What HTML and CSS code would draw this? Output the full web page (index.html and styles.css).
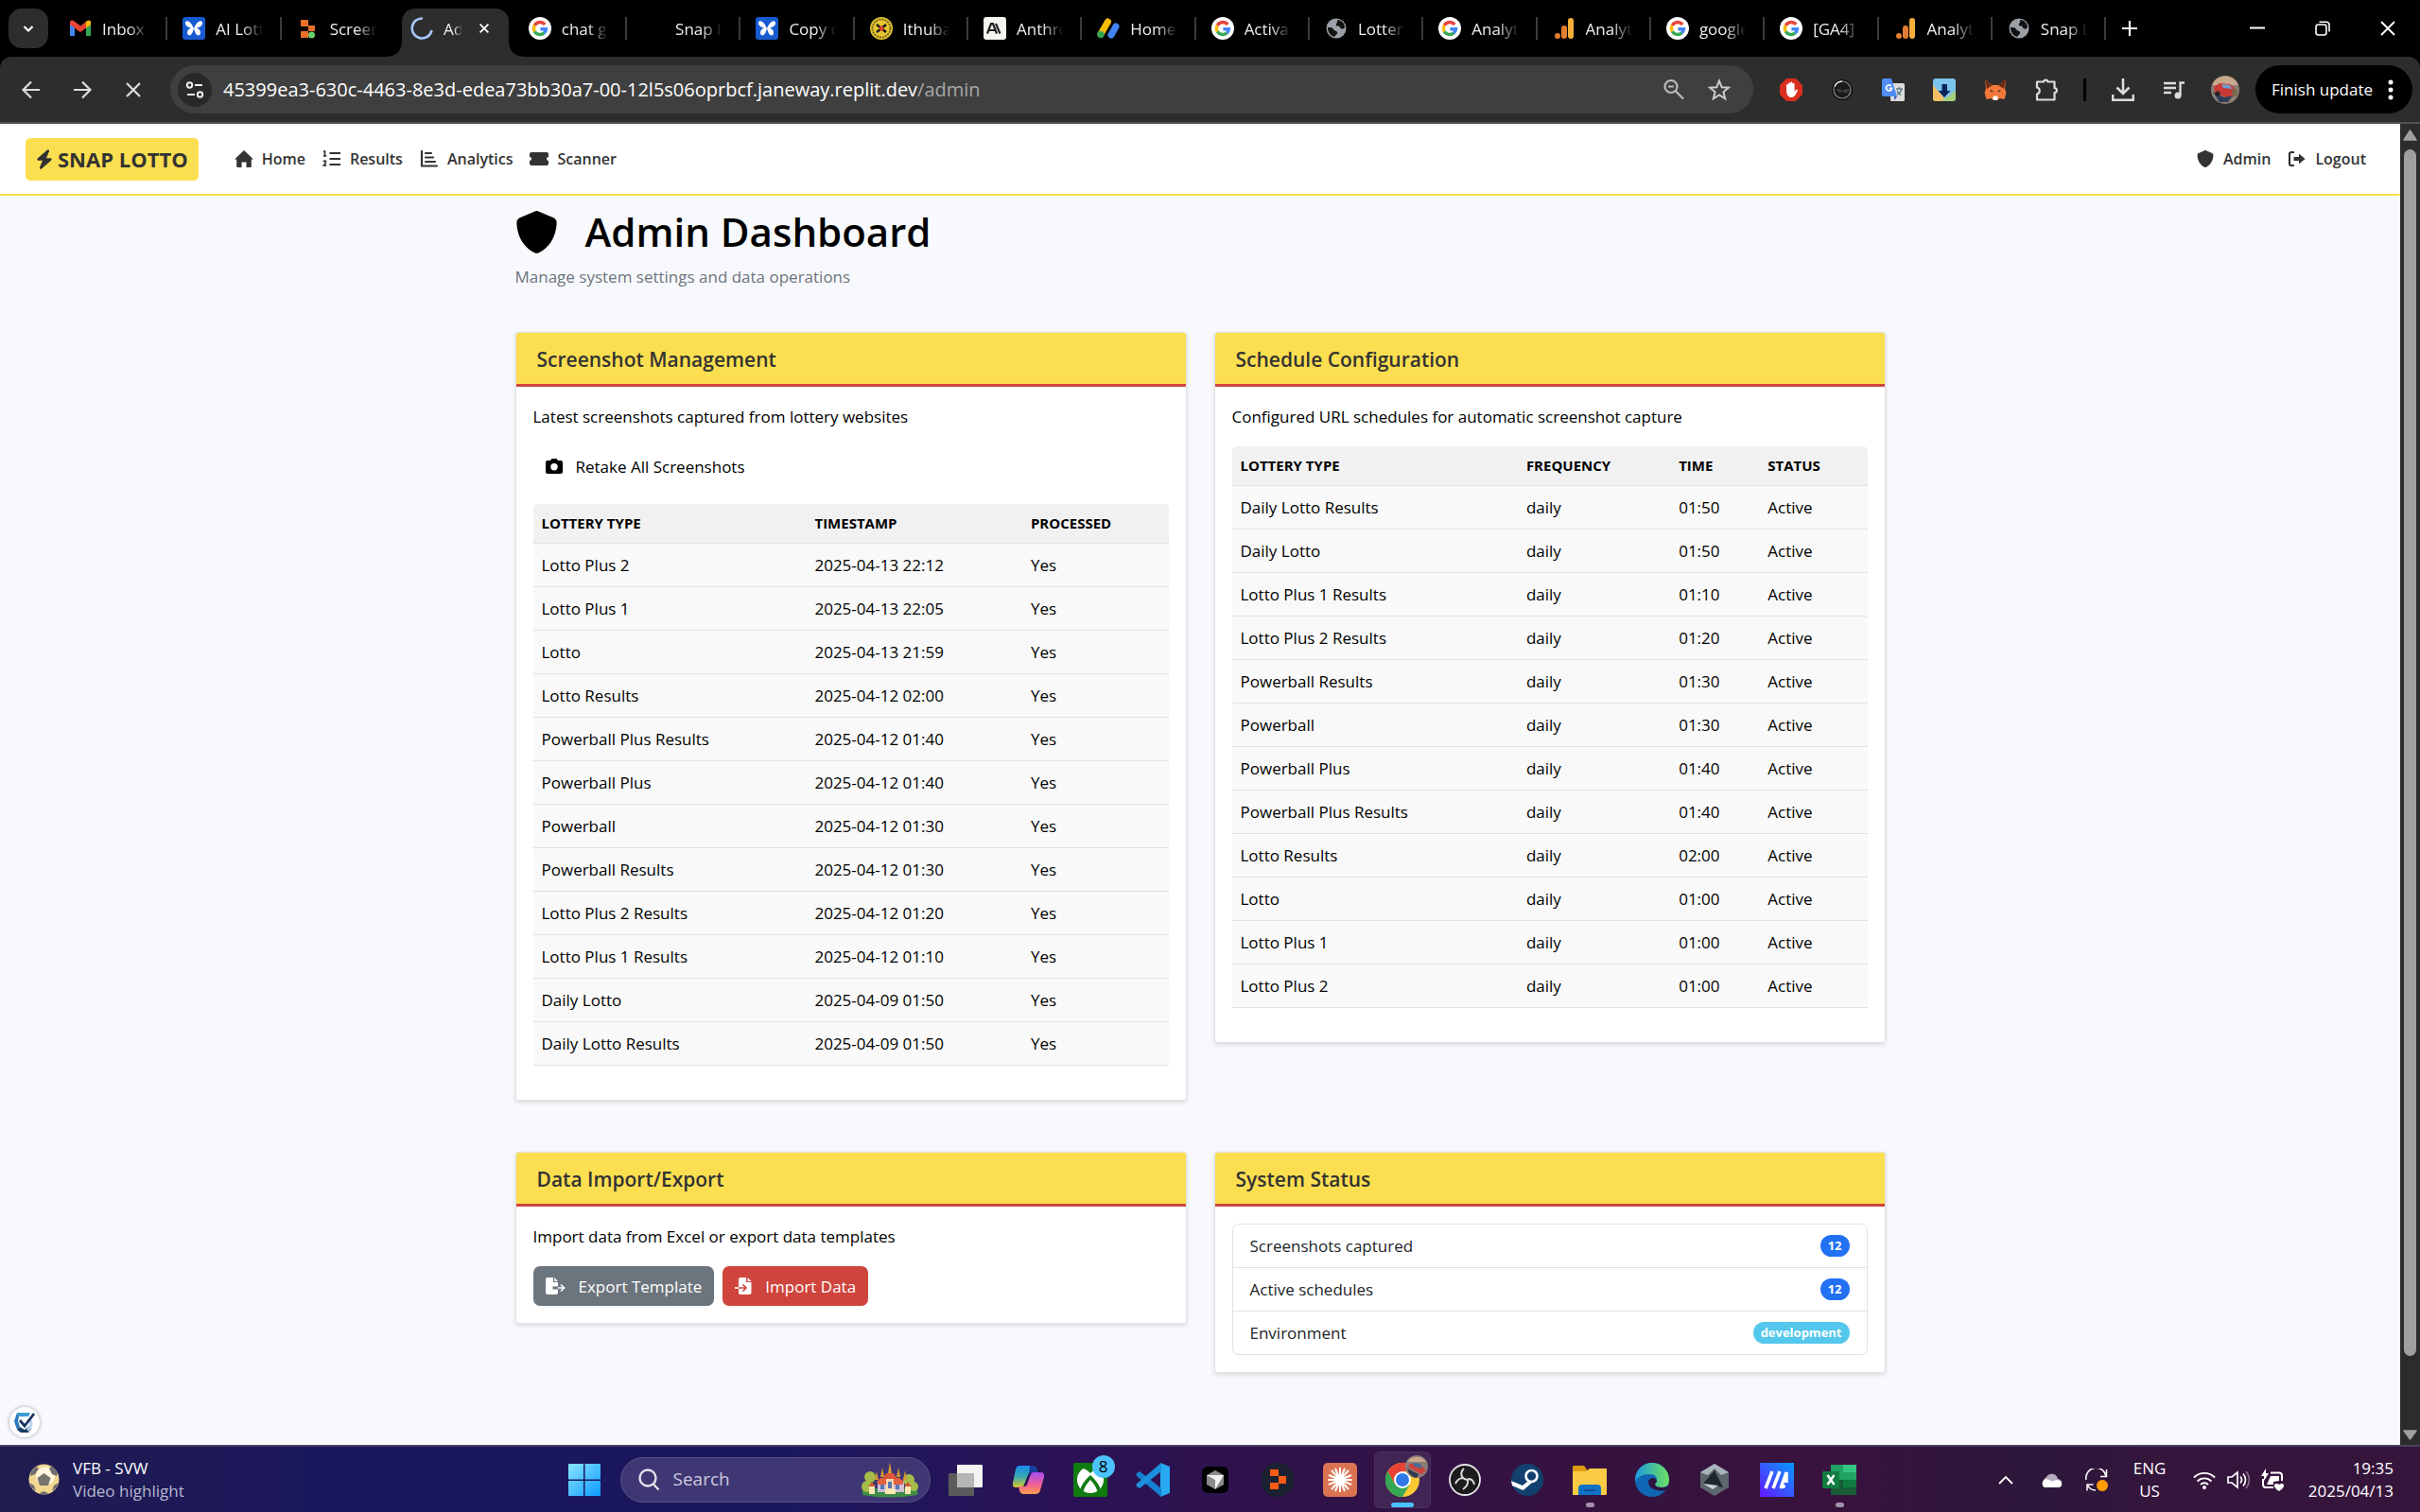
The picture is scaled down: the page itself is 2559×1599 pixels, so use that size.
FILE: index.html
```html
<!DOCTYPE html>
<html lang="en">
<head>
<meta charset="utf-8">
<meta name="viewport" content="width=device-width, initial-scale=1">
<title>Admin Dashboard - Snap Lotto</title>
<link rel="stylesheet" href="styles.css">
</head>
<body>
<svg class="sprite" aria-hidden="true">
  <symbol id="i-google" viewBox="0 0 24 24"><circle cx="12" cy="12" r="12" fill="#fff"/><g fill="none" stroke-width="3.4"><path d="M17.2 8A6.6 6.6 0 0 0 6.3 8.8" stroke="#e8453c"/><path d="M6.3 8.8a6.6 6.6 0 0 0 0 6.5" stroke="#fabb05"/><path d="M6.3 15.3a6.6 6.6 0 0 0 10 1.6" stroke="#34a853"/><path d="M16.3 16.9a6.4 6.4 0 0 0 2.2-4.2H12.4" stroke="#4285f4"/></g></symbol>
  <symbol id="i-fly" viewBox="0 0 24 24"><rect width="24" height="24" rx="3" fill="#175bd0"/><path d="M12 12C8 2 2 3 3 7c.6 3 4 4 6 4.500C5 13 4 17 6 19c3 2 5-3 6-7 1 4 3 9 6 7 2-2 1-6-3-7.500 2-.5 5.400-1.500 6-4.500C22 3 16 2 12 12z" fill="#fff"/></symbol>
  <symbol id="i-globe" viewBox="0 0 24 24"><circle cx="12" cy="12" r="10.500" fill="#9aa0a6"/><path d="M13 3c4 0 8 3 8 8-2 3-5 1-5 0 0-2-3-1-4-2-1-2 2-3 1-6zM3 11c3 0 5 0 6 2s3 1 4 3-2 3-3 5c-4-1-7-5-7-10z" fill="#111"/></symbol>
  <symbol id="i-bars" viewBox="0 0 24 24"><circle cx="5" cy="20" r="3" fill="#e37e2f"/><rect x="9" y="9" width="6" height="14" rx="3" fill="#e37e2f"/><rect x="16" y="1" width="6" height="22" rx="3" fill="#f5ae3a"/></symbol>
  <symbol id="i-shield" viewBox="0 0 512 512"><path fill="currentColor" d="M256 0c4.600 0 9.200 1 13.400 2.900L457.700 82.800c22 9.300 38.400 31 38.300 57.200c-.5 99.200-41.300 280.700-213.600 363.200c-16.700 8-36.100 8-52.800 0C57.300 420.700 16.500 239.200 16 140c-.1-26.200 16.300-47.900 38.300-57.200L242.700 2.900C246.800 1 251.400 0 256 0z"/></symbol>
</svg>

<header class="browser">
  <div class="tabstrip">
    <button class="tab-search" aria-label="Search tabs"><svg class="ic16" viewBox="0 0 16 16"><path d="M3.500 6l4.500 4.500L12.500 6" fill="none" stroke="#fff" stroke-width="2.200"/></svg></button>
    <div class="tabs">
      <a class="tab" href="#"><svg class="fav" viewBox="0 0 24 24"><path d="M1 20V7l5 4v9z" fill="#4285f4"/><path d="M18 20v-9l5-4v13z" fill="#34a853"/><path d="M1 8V5.500C1 3 3.500 3 5 4l7 5.500L19 4c1.500-1 4-1 4 1.500V8l-11 8z" fill="#ea4335"/><path d="M18 11.500V4.800c2-1.800 5-1.300 5 1.200v2z" fill="#fbbc04"/></svg><span class="tab-text">Inbox (</span></a>
      <a class="tab" href="#"><svg class="fav"><use href="#i-fly"/></svg><span class="tab-text">AI Lott</span></a>
      <a class="tab no-sep" href="#"><svg class="fav" viewBox="0 0 24 24"><path d="M4 3h8v7H4zM4 15h8v7H4zM12 9h7v6h-7z" fill="#e8702a"/><circle cx="15.500" cy="19" r="3.500" fill="#6bd06b"/></svg><span class="tab-text">Screen</span></a>
      <a class="tab active" href="#"><svg class="fav" viewBox="0 0 24 24"><path d="M13 1.500A10.500 10.500 0 1 0 22.500 14" fill="none" stroke="#a8c7fa" stroke-width="2.600"/></svg><span class="tab-text">Ad</span><svg class="ic16" viewBox="0 0 16 16"><path d="M3 3l10 10M13 3L3 13" stroke="#fff" stroke-width="2"/></svg></a>
      <a class="tab" href="#"><svg class="fav"><use href="#i-google"/></svg><span class="tab-text">chat g</span></a>
      <a class="tab" href="#"><svg class="fav"></svg><span class="tab-text">Snap L</span></a>
      <a class="tab" href="#"><svg class="fav"><use href="#i-fly"/></svg><span class="tab-text">Copy c</span></a>
      <a class="tab" href="#"><svg class="fav" viewBox="0 0 24 24"><circle cx="12" cy="12" r="12" fill="#e6c832"/><circle cx="12" cy="12" r="9.500" fill="none" stroke="#75601a" stroke-width="2" stroke-dasharray="2 1"/><path d="M7 8l10 8M17 8L7 16" stroke="#181818" stroke-width="2.500"/><circle cx="12" cy="12" r="2.500" fill="#d7402b"/></svg><span class="tab-text">Ithuba</span></a>
      <a class="tab" href="#"><svg class="fav" viewBox="0 0 24 24"><rect width="24" height="24" rx="3" fill="#f6f5f0"/><path d="M4 17.500L8 7h2l4 10.500M5.500 14h7M13 7l4.500 10.500" fill="none" stroke="#222" stroke-width="2.200"/></svg><span class="tab-text">Anthro</span></a>
      <a class="tab" href="#"><svg class="fav" viewBox="0 0 24 24"><path d="M11.500 5L4 18" stroke="#fbbc04" stroke-width="7" stroke-linecap="round"/><path d="M20 10l-5 9" stroke="#4285f4" stroke-width="7" stroke-linecap="round"/><circle cx="4" cy="18.500" r="3.700" fill="#34a853"/></svg><span class="tab-text">Home</span></a>
      <a class="tab" href="#"><svg class="fav"><use href="#i-google"/></svg><span class="tab-text">Activa</span></a>
      <a class="tab" href="#"><svg class="fav"><use href="#i-globe"/></svg><span class="tab-text">Lottery</span></a>
      <a class="tab" href="#"><svg class="fav"><use href="#i-google"/></svg><span class="tab-text">Analyt</span></a>
      <a class="tab" href="#"><svg class="fav"><use href="#i-bars"/></svg><span class="tab-text">Analyt</span></a>
      <a class="tab" href="#"><svg class="fav"><use href="#i-google"/></svg><span class="tab-text">google</span></a>
      <a class="tab" href="#"><svg class="fav"><use href="#i-google"/></svg><span class="tab-text">[GA4]</span></a>
      <a class="tab" href="#"><svg class="fav"><use href="#i-bars"/></svg><span class="tab-text">Analyt</span></a>
      <a class="tab" href="#"><svg class="fav"><use href="#i-globe"/></svg><span class="tab-text">Snap L</span></a>
    </div>
    <button class="new-tab" aria-label="New tab"><svg class="ic16" viewBox="0 0 16 16"><path d="M8 0v16M0 8h16" stroke="#fff" stroke-width="2.200"/></svg></button>
    <div class="window-controls">
      <button aria-label="Minimize"><svg class="ic16" viewBox="0 0 16 16"><path d="M0 7.500h16" stroke="#fff" stroke-width="2"/></svg></button>
      <button aria-label="Restore"><svg class="ic16" viewBox="0 0 16 16"><g fill="none" stroke="#fff" stroke-width="1.600"><rect x="1" y="4" width="11" height="11" rx="2.500"/><path d="M4.500 1.200H12A3 3 0 0 1 15 4v7.500"/></g></svg></button>
      <button aria-label="Close"><svg class="ic16" viewBox="0 0 16 16"><path d="M1 1l14 14M15 1L1 15" stroke="#fff" stroke-width="1.800"/></svg></button>
    </div>
  </div>
  <div class="toolbar">
    <button class="tool" aria-label="Back"><svg class="fav" viewBox="0 0 24 24"><path d="M21 12H4M12 3.500L3.500 12l8.500 8.500" fill="none" stroke="#ddd" stroke-width="2.200"/></svg></button>
    <button class="tool" aria-label="Forward"><svg class="fav" viewBox="0 0 24 24"><path d="M3 12h17M12 3.500l8.500 8.500-8.500 8.500" fill="none" stroke="#ddd" stroke-width="2.200"/></svg></button>
    <button class="tool" aria-label="Stop"><svg class="fav" viewBox="0 0 24 24"><path d="M5 5l14 14M19 5L5 19" stroke="#ddd" stroke-width="2.200"/></svg></button>
    <div class="omnibox">
      <button class="site-info" aria-label="Site information"><svg class="fav" viewBox="0 0 24 24"><g fill="none" stroke="#eee" stroke-width="2"><circle cx="6.500" cy="7" r="2.700"/><path d="M12 7h8M4 17h8"/><circle cx="17.500" cy="17" r="2.700"/></g></svg></button>
      <div class="url" role="textbox" aria-label="Address">45399ea3-630c-4463-8e3d-edea73bb30a7-00-12l5s06oprbcf.janeway.replit.dev<span class="path">/admin</span></div>
      <button class="omni-btn" aria-label="Zoom"><svg class="fav" viewBox="0 0 24 24"><g fill="none" stroke="#bbb" stroke-width="2.200"><circle cx="9" cy="8.500" r="6.500"/><path d="M14 13.500l8 8M6 8.500h6"/></g></svg></button>
      <button class="omni-btn" aria-label="Bookmark"><svg class="fav" viewBox="0 0 24 24"><path d="M12 2.500l2.700 6.700 7.200.5-5.500 4.600 1.800 7L12 17.400l-6.200 3.900 1.800-7-5.500-4.600 7.200-.5z" fill="none" stroke="#ccc" stroke-width="2"/></svg></button>
    </div>
    <button class="tool" aria-label="Ad blocker"><svg class="fav" viewBox="0 0 24 24"><path d="M7 0h10l7 7v10l-7 7H7l-7-7V7z" fill="#d9301f"/><path d="M7 12V7a1 1 0 0 1 2 0v4-5.500a1 1 0 0 1 2.200 0V11 4.500a1 1 0 0 1 2.200 0V11 6a1 1 0 0 1 2.200 0v8l1.400-2c1-1 2.200 0 1.700 1-1.500 3-2.700 7-6.200 7-3.500 0-5.500-2.500-5.500-8z" fill="#fff"/></svg></button>
    <button class="tool" aria-label="Dark extension"><svg class="fav" viewBox="0 0 24 24"><circle cx="12" cy="12" r="10" fill="#1a1a1a" stroke="#111" stroke-width="2"/><circle cx="12" cy="12" r="9" fill="none" stroke="#8f8f8f" stroke-width="1.200"/><path d="M4 8.500A9 9 0 0 1 12 3" fill="none" stroke="#e5e5e5" stroke-width="1.500"/><path d="M5 11h5l2 2 3-2h5l-2 4h-3l-3-1-3 1z" fill="#3c3c3c"/></svg></button>
    <button class="tool" aria-label="Translate"><svg class="fav" viewBox="0 0 24 24"><rect x="9" y="5" width="15" height="19" rx="1.500" fill="#dcdcdc"/><path d="M15 11h7M18.500 9v2m2.500 0c-1 4-3 5-5 6m0-4c1 2 3 3 4 5" fill="none" stroke="#607d8b" stroke-width="1.400"/><path d="M2 0h8l6 19H2a2 2 0 0 1-2-2V2a2 2 0 0 1 2-2z" fill="#4f8df5"/><path d="M13 19h3l-2.500 4z" fill="#3a4fc0"/><path d="M9.800 8A3 3 0 1 0 10.500 10.300H7.800" fill="none" stroke="#fff" stroke-width="1.700"/></svg></button>
    <button class="tool" aria-label="Downloader"><svg class="fav" viewBox="0 0 24 24"><rect width="24" height="24" rx="3" fill="#7cc4ea"/><path d="M0 7l12 14-2 3H3a3 3 0 0 1-3-3z" fill="#f5c063"/><path d="M24 13v8a3 3 0 0 1-3 3H9z" fill="#a4cf7b"/><path d="M9.500 6h5.500v7h3.500L12 20l-6.500-7h4z" fill="#06245c"/></svg></button>
    <button class="tool" aria-label="Wallet"><svg class="fav" viewBox="0 0 24 24"><path d="M1 1l8 6h6l8-6-1 10 1.500 4-2 7-5-1-2 2h-5l-2-2-5 1-2-7L2 11z" fill="#f2773a"/><path d="M1 1l8 6-6 4zM23 1l-8 6 6 4z" fill="#6b2b14"/><path d="M9 20.500l1.500-2h3l1.500 2-1.500 2.500h-3z" fill="#fff"/><path d="M6 12l3.500 1-1 1.500zM18 12l-3.500 1 1 1.500z" fill="#222"/></svg></button>
    <button class="tool" aria-label="Extensions"><svg class="fav" viewBox="0 0 24 24"><path d="M2 3.500h7a2.300 2.300 0 0 1 4.500 0H20.500v6.700a2.300 2.300 0 0 1 0 4.800v7.500H2v-6a3.600 3.600 0 0 0 0-7z" fill="none" stroke="#ddd" stroke-width="2.200" stroke-linejoin="round"/></svg></button>
    <span class="tool-sep"></span>
    <button class="tool" aria-label="Downloads"><svg class="fav" viewBox="0 0 24 24"><path d="M12 0v16M5.500 9.500L12 16l6.500-6.500M1.200 17v5.800h21.600V17" fill="none" stroke="#ddd" stroke-width="2.500"/></svg></button>
    <button class="tool" aria-label="Media"><svg class="fav" viewBox="0 0 24 24"><path d="M1 5h13M1 10h13M1 15h8M18.500 18V4.500H23" fill="none" stroke="#ddd" stroke-width="2.300"/><circle cx="16" cy="18" r="3.500" fill="#ddd"/></svg></button>
    <button class="tool" aria-label="Profile"><svg class="ic30" viewBox="0 0 30 30"><circle cx="15" cy="15" r="15" fill="#8b8076"/><path d="M1 10a15 15 0 0 1 28 0z" fill="#c8a98b"/><path d="M3 12l6-4 11 1 5 4v8l-9 2-12-5z" fill="#c83a36"/><path d="M11 9l9 1 2 4-9-1z" fill="#6fa0cf"/><path d="M2 17l12 6 9-2-5 7H9z" fill="#2f3e55"/><circle cx="7" cy="19" r="2.500" fill="#222"/><path d="M22 14h6v7l-5 2z" fill="#7c6a4f"/></svg></button>
    <button class="update">Finish update<svg class="dots" viewBox="0 0 6 24"><g fill="#fff"><circle cx="3" cy="4" r="2.500"/><circle cx="3" cy="12" r="2.500"/><circle cx="3" cy="20" r="2.500"/></g></svg></button>
  </div>
</header>

<div class="viewport">
  <div class="page">
    <nav class="navbar">
      <a class="brand" href="#"><svg class="bolt" viewBox="0 0 448 512"><path fill="currentColor" d="M349.400 44.600c5.900-13.700 1.500-29.700-10.600-38.500s-28.600-8-39.900 1.800l-256 224c-10 8.800-13.600 22.900-8.900 35.300S50.700 288 64 288l111.500 0L98.600 467.400c-5.900 13.700-1.500 29.700 10.600 38.500s28.600 8 39.900-1.800l256-224c10-8.800 13.600-22.900 8.900-35.300s-16.600-20.700-30-20.700l-111.500 0L349.400 44.600z"/></svg>SNAP LOTTO</a>
      <a class="nav-link" href="#"><svg class="nav-ic" viewBox="0 0 20 18"><path fill="currentColor" d="M10 0l10 9.500h-2.200V17q0 1-1 1H12.500v-5.500h-5V18H3.200q-1 0-1-1V9.500H0z"/></svg>Home</a>
      <a class="nav-link" href="#"><svg class="nav-ic" viewBox="0 0 20 18"><path d="M7.500 3H19M7.500 9H19M7.500 15H19" stroke="currentColor" stroke-width="2.200"/><path d="M1 1.200h1.500V6M.8 6h3.500M.8 11.800q2-1.500 2.700 0 .3 1-2.200 4.200h3" fill="none" stroke="currentColor" stroke-width="1.700"/></svg>Results</a>
      <a class="nav-link" href="#"><svg class="nav-ic" viewBox="0 0 20 18"><path d="M2 1v15.500h16M6 3h6M6 7.500h8M6 12h10" fill="none" stroke="currentColor" stroke-width="2.200" stroke-linecap="round"/></svg>Analytics</a>
      <a class="nav-link" href="#"><svg class="nav-ic" viewBox="0 0 20 18"><path fill="currentColor" d="M2 2h16q2 0 2 2v3a2 2 0 0 0 0 4v3q0 2-2 2H2q-2 0-2-2v-3a2 2 0 0 0 0-4V4q0-2 2-2z"/></svg>Scanner</a>
      <span class="spacer"></span>
      <a class="nav-link" href="#"><svg class="nav-ic"><use href="#i-shield"/></svg>Admin</a>
      <a class="nav-link" href="#"><svg class="nav-ic" viewBox="0 0 20 18"><path d="M7 2H4Q2 2 2 4v10q0 2 2 2h3" fill="none" stroke="currentColor" stroke-width="2.200"/><path fill="currentColor" d="M6.500 7H12V3.500L18.500 9 12 14.500V11H6.500z"/></svg>Logout</a>
    </nav>

    <main class="content">
      <h1 class="title"><svg class="title-ic"><use href="#i-shield"/></svg>Admin Dashboard</h1>
      <p class="subtitle">Manage system settings and data operations</p>
      <div class="cards">
        <section class="card">
          <h2 class="card-title">Screenshot Management</h2>
          <div class="card-body">
            <p>Latest screenshots captured from lottery websites</p>
            <button class="btn plain"><svg class="btn-ic" viewBox="0 0 18 18"><path fill="currentColor" fill-rule="evenodd" d="M2 3h3l1.500-2h5L13 3h3q2 0 2 2v10q0 2-2 2H2q-2 0-2-2V5q0-2 2-2zm7 3a3.700 3.700 0 1 0 0 7.400A3.700 3.700 0 0 0 9 6z"/></svg>Retake All Screenshots</button>
            <table class="table shots">
              <colgroup><col class="c-type"><col class="c-stamp"><col></colgroup>
              <thead><tr><th>Lottery Type</th><th>Timestamp</th><th>Processed</th></tr></thead>
              <tbody>
                <tr><td>Lotto Plus 2</td><td>2025-04-13 22:12</td><td>Yes</td></tr>
                <tr><td>Lotto Plus 1</td><td>2025-04-13 22:05</td><td>Yes</td></tr>
                <tr><td>Lotto</td><td>2025-04-13 21:59</td><td>Yes</td></tr>
                <tr><td>Lotto Results</td><td>2025-04-12 02:00</td><td>Yes</td></tr>
                <tr><td>Powerball Plus Results</td><td>2025-04-12 01:40</td><td>Yes</td></tr>
                <tr><td>Powerball Plus</td><td>2025-04-12 01:40</td><td>Yes</td></tr>
                <tr><td>Powerball</td><td>2025-04-12 01:30</td><td>Yes</td></tr>
                <tr><td>Powerball Results</td><td>2025-04-12 01:30</td><td>Yes</td></tr>
                <tr><td>Lotto Plus 2 Results</td><td>2025-04-12 01:20</td><td>Yes</td></tr>
                <tr><td>Lotto Plus 1 Results</td><td>2025-04-12 01:10</td><td>Yes</td></tr>
                <tr><td>Daily Lotto</td><td>2025-04-09 01:50</td><td>Yes</td></tr>
                <tr><td>Daily Lotto Results</td><td>2025-04-09 01:50</td><td>Yes</td></tr>
              </tbody>
            </table>
          </div>
        </section>
        <section class="card">
          <h2 class="card-title">Schedule Configuration</h2>
          <div class="card-body">
            <p>Configured URL schedules for automatic screenshot capture</p>
            <table class="table schedules">
              <colgroup><col class="c-type"><col class="c-freq"><col class="c-time"><col></colgroup>
              <thead><tr><th>Lottery Type</th><th>Frequency</th><th>Time</th><th>Status</th></tr></thead>
              <tbody>
                <tr><td>Daily Lotto Results</td><td>daily</td><td>01:50</td><td>Active</td></tr>
                <tr><td>Daily Lotto</td><td>daily</td><td>01:50</td><td>Active</td></tr>
                <tr><td>Lotto Plus 1 Results</td><td>daily</td><td>01:10</td><td>Active</td></tr>
                <tr><td>Lotto Plus 2 Results</td><td>daily</td><td>01:20</td><td>Active</td></tr>
                <tr><td>Powerball Results</td><td>daily</td><td>01:30</td><td>Active</td></tr>
                <tr><td>Powerball</td><td>daily</td><td>01:30</td><td>Active</td></tr>
                <tr><td>Powerball Plus</td><td>daily</td><td>01:40</td><td>Active</td></tr>
                <tr><td>Powerball Plus Results</td><td>daily</td><td>01:40</td><td>Active</td></tr>
                <tr><td>Lotto Results</td><td>daily</td><td>02:00</td><td>Active</td></tr>
                <tr><td>Lotto</td><td>daily</td><td>01:00</td><td>Active</td></tr>
                <tr><td>Lotto Plus 1</td><td>daily</td><td>01:00</td><td>Active</td></tr>
                <tr><td>Lotto Plus 2</td><td>daily</td><td>01:00</td><td>Active</td></tr>
              </tbody>
            </table>
          </div>
        </section>
        <section class="card">
          <h2 class="card-title">Data Import/Export</h2>
          <div class="card-body">
            <p>Import data from Excel or export data templates</p>
            <div class="btn-row">
              <button class="btn gray"><svg class="btn-ic wide" viewBox="0 0 21 18"><path fill="#fff" d="M2 0h6v5h5v4.500H7.500v3H13V16q0 2-2 2H2q-2 0-2-2V2q0-2 2-2zM9.200 0L13 4H9.200z"/><path d="M13 11h6M16 7.500l3.500 3.500-3.500 3.500" fill="none" stroke="#fff" stroke-width="1.700"/></svg>Export Template</button>
              <button class="btn red"><svg class="btn-ic" viewBox="0 0 18 18"><path fill="#fff" d="M6 0h6v5h5.500v11q0 2-2 2H6q-2 0-2-2V2q0-2 2-2zM13.500 0l4 4h-4z"/><path d="M0 11h4" stroke="#fff" stroke-width="1.700"/><path d="M4 11h7.500M8.500 7.500L12 11l-3.500 3.500" fill="none" stroke="#cf443d" stroke-width="1.700"/></svg>Import Data</button>
            </div>
          </div>
        </section>
        <section class="card">
          <h2 class="card-title">System Status</h2>
          <div class="card-body">
            <ul class="status">
              <li>Screenshots captured<span class="badge">12</span></li>
              <li>Active schedules<span class="badge">12</span></li>
              <li>Environment<span class="badge info">development</span></li>
            </ul>
          </div>
        </section>
      </div>
    </main>
    <button class="verify" aria-label="Page check"><svg class="fav" viewBox="0 0 24 24"><path d="M4 2h14l-2 4H6z" fill="#3f9ad6"/><path d="M4 2l-3 9 3 9 3-3-2-6 1-5z" fill="#2b78ba"/><path d="M4 20l4 3h8l3-4-2-3-5 4-5-3z" fill="#183b66"/><path d="M19 9c3 5 1 9-3 13l-2-3c3-2 4-5 3-8z" fill="#b9cfec"/><path d="M7 10l5 6L22 3" fill="none" stroke="#17335e" stroke-width="2.800"/></svg></button>
  </div>
  <div class="scrollbar" aria-hidden="true">
    <svg class="arrow" viewBox="0 0 21 27"><path d="M10.500 7L17 17H4z" fill="#a0a0a0" stroke="#a0a0a0" stroke-width="1.500" stroke-linejoin="round"/></svg>
    <div class="track"><div class="thumb"></div></div>
    <svg class="arrow" viewBox="0 0 21 27"><path d="M10.500 21L17 12H4z" fill="#a0a0a0" stroke="#a0a0a0" stroke-width="1.500" stroke-linejoin="round"/></svg>
  </div>
</div>

<footer class="taskbar">
  <button class="widget">
    <svg class="ic33" viewBox="0 0 33 33"><circle cx="16.500" cy="16.500" r="16" fill="#f1d690"/><circle cx="18" cy="13" r="10" fill="#fff6dc"/><path d="M16.500 10l7 5-2.500 8h-9l-2.500-8z" fill="#77736d"/><path d="M3 8l5-5 3 2-4 6-5 2zM25 2l6 7-1 4-5-2-3-6zM1 20l5 3 2 6-5-4zM32 20l-5 3-2 6 5-4zM12 31l4-2 5 2-3 2h-4z" fill="#6f6d70"/></svg>
    <span><span class="w-title">VFB - SVW</span><span class="w-sub">Video highlight</span></span>
  </button>
  <div class="apps">
    <button class="app" aria-label="Start"><svg class="ic36" viewBox="0 0 36 36"><defs><linearGradient id="win" x2="1" y2="1"><stop stop-color="#8ce4ff"/><stop offset="1" stop-color="#0a9bff"/></linearGradient></defs><path d="M1 2q0-1 1-1h15v16.500H1zM18.500 1H34q1 0 1 1v15.500H18.500zM1 19h16v16H2q-1 0-1-1zM18.500 19H35v15q0 1-1 1H18.500z" fill="url(#win)"/></svg></button>
    <label class="search">
      <svg class="fav" viewBox="0 0 24 24"><g fill="none" stroke="#e4e2ee" stroke-width="2.400"><circle cx="11" cy="10" r="8.500"/><path d="M17 16.500l5.500 6"/></g></svg>
      <input type="search" placeholder="Search" aria-label="Search">
      <svg class="castle" viewBox="0 0 62 38"><path d="M2 35Q0 28 6 28h50q6 0 4 7-30 5-58 0z" fill="#3d8b45"/><g fill="#a7bd4a"><circle cx="10" cy="16" r="6"/><circle cx="7" cy="26" r="6"/><circle cx="51" cy="19" r="6"/><circle cx="56" cy="26" r="5"/></g><path d="M18 20h28v12H18z" fill="#cdbfd6"/><path d="M17 21l4-4h20l5 4-2 3H19z" fill="#e4603e"/><path d="M27 12h8v18h-8z" fill="#f3d8b0"/><path d="M31 0l2 12h-4zM23 6l2 10h-4zM40 6l2 10h-4zM17 10l2 9h-4zM47 9l2 10h-4z" fill="#d99a32"/><path d="M27 12h8l4 6H23z" fill="#dd5637"/><path d="M21 24h4v5h-4zM37 24h4v5h-4zM29 21h4v7h-4z" fill="#5877b5"/><path d="M9 26h6v8H9zM47 26h6v8h-6zM26 29h11v5H26z" fill="#fbe8b4"/><path d="M8 26l4-5 4 5zM46 26l4-5 4 5z" fill="#c65b33"/></svg>
    </label>
    <button class="app" aria-label="Task view"><svg class="ic36" viewBox="0 0 36 36"><rect x="9" y="2" width="27" height="24" rx="1" fill="#f3f3f3"/><rect y="11" width="27" height="24" rx="1" fill="#5b5b5e"/><path d="M9 11h18v15H9z" fill="#b5b5b5"/></svg></button>
    <button class="app" aria-label="Copilot"><svg class="ic36" viewBox="0 0 36 36"><defs><linearGradient id="cpa" x2="0" y2="1"><stop stop-color="#1a8df0"/><stop offset=".5" stop-color="#38a7b0"/><stop offset="1" stop-color="#d9c72a"/></linearGradient><linearGradient id="cpb" x2="0" y2="1"><stop stop-color="#a54df0"/><stop offset=".6" stop-color="#f2618f"/><stop offset="1" stop-color="#fba24a"/></linearGradient></defs><path d="M9 3h14q3 0 4 3l1 4h-6q-3 0-4 3l-4 10q-1 3-3 3H5q-4 0-3-5L5 7q1-4 4-4z" fill="url(#cpa)"/><path d="M28 10h3q5 0 4 5l-4 14q-1 4-5 4H13q-3 0-4-4l-1-4h6q2 0 3-2l4-11q1-2 3-2z" fill="url(#cpb)"/><path d="M20 3h3q3 0 4 3l1 4h-6q-2 0-3 2z" fill="#173e9c"/></svg></button>
    <button class="app" aria-label="Xbox"><svg class="ic36" viewBox="0 0 36 36"><rect width="36" height="36" rx="2" fill="#107c10"/><circle cx="18" cy="18" r="14" fill="#fff"/><path d="M9 6q4 0 9 5 5-5 9-5l-4-3H13zM18 13q9 8 11 16l-3 3q-2-8-8-14-6 6-8 14l-3-3q2-8 11-16z" fill="#107c10"/></svg><span class="count">8</span></button>
    <button class="app" aria-label="Visual Studio Code"><svg class="ic36" viewBox="0 0 36 36"><path d="M26 0l10 4v28l-10 4z" fill="#27aaf2"/><path d="M1 11l3-2L27 27v9L1 14q-1-1 0-3z" fill="#1480cf"/><path d="M1 25l3 2L27 9V0L1 22q-1 2 0 3z" fill="#1d90dc"/></svg></button>
    <button class="app" aria-label="Cursor"><svg class="ic36" viewBox="0 0 36 36"><rect x="4" y="4" width="28" height="28" rx="6" fill="#000"/><path d="M18 8l9 5v10l-9 5-9-5V13z" fill="#8b8b8b"/><path d="M9 13h18l-9 15V18z" fill="#f1f1f1"/></svg></button>
    <button class="app" aria-label="Replit"><svg class="ic36" viewBox="0 0 36 36"><circle cx="18" cy="18" r="18" fill="#1b2130"/><path d="M10 7h9v7h-9zM19 14h8v8h-8zM10 21h9v7h-9z" fill="#ff5b13"/></svg></button>
    <button class="app" aria-label="Claude"><svg class="ic36" viewBox="0 0 36 36"><rect width="36" height="36" rx="5" fill="#d97352"/><path d="M18 5v26M5 18h26M9 8l18 20M27 8L9 28M13 6l10 24M23 6L13 30M6 13l24 10M30 13L6 23" stroke="#fff" stroke-width="2"/></svg></button>
    <button class="app current running" aria-label="Chrome"><svg class="ic36" viewBox="0 0 36 36"><circle cx="18" cy="18" r="18" fill="#fcc934"/><path d="M2.400 9a18 18 0 0 1 31.200 0H18l-8 13.500z" fill="#ea4335"/><path d="M2.400 9A18 18 0 0 0 18 36l8-13.500-8 4.500-8-4.500z" fill="#34a853"/><circle cx="18" cy="18" r="9" fill="#fff"/><circle cx="18" cy="18" r="7" fill="#3079e8"/></svg><svg class="profile" viewBox="0 0 24 24"><circle cx="12" cy="12" r="12" fill="#8a7c76"/><path d="M2 7a12 12 0 0 1 20 0z" fill="#c9a88c"/><path d="M4 9l12 1 6 6-5 4-13-7z" fill="#d0413b"/><path d="M8 8l8 1 2 5-8-2z" fill="#456e9e"/><path d="M2 14l12 6-2 4q-8-2-10-10z" fill="#333b52"/></svg></button>
    <button class="app" aria-label="OBS"><svg class="ic36" viewBox="0 0 36 36"><circle cx="18" cy="18" r="16" fill="#1c1c1e" stroke="#e6e6e6" stroke-width="1.800"/><path d="M17 6q-5 5-1 10 3 3 7 1 4 1 5 6M16 16q-5 0-8 6M21 18q1 6-5 10" fill="none" stroke="#d8d8d8" stroke-width="2"/></svg></button>
    <button class="app" aria-label="Steam"><svg class="ic36" viewBox="0 0 36 36"><circle cx="18" cy="18" r="17" fill="#12416f"/><circle cx="22.500" cy="14" r="6" fill="none" stroke="#fff" stroke-width="2.600"/><path d="M1 19l12 5 5-4 5 1-7 6q-2 3-5 1L2 24z" fill="#fff"/></svg></button>
    <button class="app running" aria-label="File Explorer"><svg class="ic36" viewBox="0 0 36 36"><path d="M1 3h11l3 4v8H0V4q0-1 1-1z" fill="#dc9b13"/><path d="M0 9h14l4-3h17q1 0 1 1v26q0 1-1 1H0z" fill="#fccb45"/><path d="M6 34V27q0-4 4-4h16q4 0 4 4v7z" fill="#0f72c7"/><path d="M12 28h12v2H12z" fill="#0a4f94"/></svg></button>
    <button class="app" aria-label="Edge"><svg class="ic36" viewBox="0 0 36 36"><defs><linearGradient id="edge" x2="1" y2="0"><stop stop-color="#1c9ce4"/><stop offset="1" stop-color="#6ee05c"/></linearGradient></defs><circle cx="18" cy="18" r="18" fill="#1165b5"/><path d="M0 18A18 18 0 0 1 36 18q0 8-8 8-7 0-7-4 2-1 2-4 0-6-8-6Q4 12 0 20z" fill="url(#edge)"/><path d="M21 22q0 4 7 4 5 0 7-2-1 3-3 5-4 1-9 0-9-2-9-9 1-4 5-4 4 1 4 3 0 2-2 3z" fill="#2d123f"/></svg></button>
    <button class="app" aria-label="Hex app"><svg class="ic36" viewBox="0 0 36 36"><path d="M18 1l15 9v16l-15 9-15-9V10z" fill="#5c666f"/><path d="M18 1l15 9-8 3-7-7-7 7-8-3z" fill="#aab3ba"/><path d="M18 8l9 18-21-4z" fill="#20262d"/><path d="M6 22l16 2-6 4z" fill="#c6ced4"/></svg></button>
    <button class="app" aria-label="MA app"><svg class="ic36" viewBox="0 0 36 36"><defs><linearGradient id="ma" x1="0" y1="1" x2="1" y2="0"><stop stop-color="#6516ff"/><stop offset="1" stop-color="#079bff"/></linearGradient></defs><path d="M0 0h36v36H0z" fill="url(#ma)"/><path d="M6 27L13 9M14 27l7-18M22 27l6-17v11" fill="none" stroke="#fff" stroke-width="3.500"/><circle cx="25" cy="25" r="2" fill="#fff"/></svg></button>
    <button class="app running" aria-label="Excel"><svg class="ic36" viewBox="0 0 36 36"><path d="M9 2h27v32H9z" fill="#21a366"/><path d="M22 2h14v8H22z" fill="#33c481"/><path d="M9 18h27v16H9z" fill="#185c37"/><path d="M22 18h14v8H22z" fill="#107c41"/><rect y="9" width="18" height="18" rx="1" fill="#107c41"/><path d="M5.500 13l7 10M12.500 13l-7 10" stroke="#fff" stroke-width="2.400"/></svg></button>
  </div>
  <div class="tray">
    <button class="tray-btn" aria-label="Hidden icons"><svg class="ic16" viewBox="0 0 16 16"><path d="M1 12l7-7 7 7" fill="none" stroke="#fff" stroke-width="1.800"/></svg></button>
    <button class="tray-btn" aria-label="OneDrive"><svg class="fav" viewBox="0 0 24 24"><path d="M6 19a6 6 0 0 1 1-10 6.500 6.500 0 0 1 12 2q5 1 4 5z" fill="#b7a9bd"/><path d="M5 20a5 5 0 0 1 1-9q4 0 6 2.500l3-.5q3-2 6 0 3 2 2 5-1 2-3 2z" fill="#fff"/></svg></button>
    <button class="tray-btn" aria-label="Update"><svg class="fav" viewBox="0 0 24 24"><path d="M1 12A10.500 10.500 0 0 1 22 8M22.500 1v7.500H16M2 23.500V17h6.500M2 17q3 6 9 6" fill="none" stroke="#fff" stroke-width="1.500"/><circle cx="18" cy="18" r="6" fill="#ff9b05"/></svg></button>
    <button class="lang">ENG<br>US</button>
    <button class="sys" aria-label="Network, volume and battery">
      <svg class="fav" viewBox="0 0 24 24"><g fill="none" stroke="#fff" stroke-width="1.900"><path d="M1 9.500a15.500 15.500 0 0 1 22 0M4.500 13.500a10.500 10.500 0 0 1 15 0M8 17a5.500 5.500 0 0 1 8 0"/></g><circle cx="12" cy="20" r="2" fill="#fff"/></svg>
      <svg class="fav" viewBox="0 0 24 24"><g fill="none" stroke="#fff" stroke-width="1.700"><path d="M1 9h4l6-5v16l-6-5H1zM14 8.500q3 3.500 0 7M17 5.500q5 6.500 0 13"/><path d="M20 3q7 9 0 18" stroke="#826c88"/></g></svg>
      <svg class="fav" viewBox="0 0 24 24"><path d="M2 11v6q0 3 3 3h8M10 4.500h9q3 0 3 3V13" fill="none" stroke="#fff" stroke-width="2"/><path d="M10 8h9v5l-6 1v3H6z" fill="#fff"/><path d="M5 0L0 8h3v5l5-8H5z" fill="#fff"/><path d="M19 24q-6-4-5-7 2-2 5 0 3-2 5 0 1 3-5 7z" fill="#fff"/></svg>
    </button>
    <button class="clock">19:35<br>2025/04/13</button>
  </div>
</footer>
</body>
</html>
```
FILE: styles.css
```css
* { box-sizing: border-box; }
body {
  margin: 0;
  min-height: 100vh;
  display: flex;
  flex-direction: column;
  font: 17px/27px "Open Sans", "Noto Sans", sans-serif;
  color: #000;
  background: #000;
}
button { font: inherit; color: inherit; background: none; border: 0; padding: 0; }
a { color: inherit; text-decoration: none; }
p, h1, h2 { margin: 0; }
svg { display: block; flex: none; }
.sprite { position: absolute; width: 0; height: 0; }
.ic16 { width: 16px; height: 16px; }
.fav { width: 24px; height: 24px; }
.ic30 { width: 30px; height: 30px; }
.ic33 { width: 33px; height: 33px; }
.ic36 { width: 36px; height: 36px; }

/* Browser frame */
.browser { color: #fff; }
.tabstrip { display: flex; align-items: center; height: 60px; padding-left: 9px; }
.tab-search { display: grid; place-items: center; width: 42px; height: 42px; border-radius: 14px; background: #2d2d2d; }
.tabs { display: flex; flex: 1; min-width: 0; height: 60px; margin: 0 11px 0 6px; }
.tab {
  position: relative;
  flex: 1 1 0;
  min-width: 0;
  display: flex;
  align-items: center;
  gap: 11px;
  padding: 0 14px 0 16px;
}
.tab::after { content: ""; position: absolute; right: 0; top: 18px; width: 2px; height: 24px; background: #3c3c3c; }
.tab-text { flex: 1; min-width: 0; overflow: hidden; white-space: nowrap; color: #eee; mask-image: linear-gradient(90deg, #000 50%, transparent 90%); }
.no-sep::after { display: none; }
.active { z-index: 1; flex-grow: 1.05; }
.active .tab-text { flex: none; width: 22px; }
.active .ic16 { width: 14px; height: 14px; margin-left: 3px; }
.active > * { position: relative; }
.active::before {
  content: "";
  position: absolute;
  inset: 9px 5px 0 7px;
  border-radius: 14px 14px 0 0;
  background: #2d2d2d;
}
.active::after {
  left: -7px;
  right: -9px;
  top: auto;
  bottom: 0;
  width: auto;
  height: 14px;
  background:
    radial-gradient(circle at 0 0, transparent 13px, #2d2d2d 14px) left / 14px 14px no-repeat,
    radial-gradient(circle at 100% 0, transparent 13px, #2d2d2d 14px) right / 14px 14px no-repeat;
}
.new-tab { display: grid; place-items: center; width: 28px; height: 28px; }
.window-controls { display: flex; padding: 0 0 0 86px; }
.window-controls button { display: grid; place-items: center; width: 69px; height: 60px; }
.toolbar {
  display: flex;
  align-items: center;
  height: 71px;
  padding: 0 8px 0 6px;
  background: #2d2d2d;
  border-bottom: 2px solid #515151;
  border-radius: 12px 12px 0 0;
}
.tool { display: grid; place-items: center; width: 54px; height: 42px; }
.omnibox {
  flex: 1;
  display: flex;
  align-items: center;
  height: 51px;
  margin: 0 13px 0 12px;
  padding: 0 12px 0 8px;
  border-radius: 26px;
  background: #3f3f3f;
}
.site-info { display: grid; place-items: center; width: 36px; height: 36px; border-radius: 50%; background: #292929; }
.url { flex: 1; margin-left: 12px; font-size: 20px; white-space: nowrap; }
.path { color: #a8a8a8; }
.omni-btn { display: grid; place-items: center; width: 48px; height: 36px; }
.tool-sep { width: 3px; height: 24px; margin: 0 12px; background: #000; }
.update {
  display: flex;
  align-items: center;
  justify-content: space-between;
  width: 166px;
  height: 51px;
  margin-left: 5px;
  padding: 0 20px 0 17px;
  border-radius: 26px;
  background: #000;
  white-space: nowrap;
  font-size: 17px;
}
.dots { width: 6px; height: 24px; }

/* Web page */
.viewport { flex: 1; display: flex; background: #f8f9fc; }
.page { flex: 1; min-width: 0; position: relative; }
.navbar {
  display: flex;
  align-items: center;
  gap: 18px;
  height: 76px;
  padding: 0 36px 0 27px;
  background: #fff;
  border-bottom: 2px solid #fcdf50;
  color: #333;
}
.brand {
  display: flex;
  align-items: center;
  height: 45px;
  gap: 5px;
  margin-right: 20px;
  padding: 0 11px;
  border-radius: 5px;
  background: #fcdf50;
  font-size: 22px;
  font-weight: 700;
}
.bolt { width: 18px; height: 23px; }
.nav-link { display: flex; align-items: center; gap: 9px; font-size: 16px; font-weight: 600; }
.nav-ic { width: 20px; height: 18px; }
.spacer { flex: 1; }
.content { max-width: 1485px; margin: 0 auto; padding: 11px 18px 75px; }
.title { display: flex; align-items: center; gap: 29px; font-size: 42px; line-height: 54px; font-weight: 600; }
.title-ic { width: 45px; height: 45px; }
.subtitle { margin: 7px 0 45px; color: #6c757d; }
.cards { display: grid; grid-template-columns: 1fr 1fr; align-items: start; gap: 54px 29px; }
.card { background: #fff; border: 1px solid #e0e2e6; border-radius: 3px; box-shadow: 0 2px 5px rgba(0, 0, 0, .12); }
.card-title {
  height: 57px;
  padding: 0 22px;
  border-bottom: 3px solid #cf443d;
  border-radius: 2px 2px 0 0;
  background: #fcdf50;
  color: #333;
  font-size: 21px;
  line-height: 56px;
  font-weight: 600;
}
.card-body { padding: 18px; }
.card-body > p { margin-bottom: 18px; }
.btn { display: flex; align-items: center; height: 42px; gap: 14px; padding: 0 13px; border-radius: 7px; white-space: nowrap; color: #fff; }
.btn-ic { width: 18px; height: 18px; }
.btn-ic.wide { width: 21px; }
.plain { color: #000; margin-bottom: 19px; }
.gray { background: #6c757d; }
.red { background: #cf443d; }
.btn-row { display: flex; gap: 9px; }
.table { width: 100%; table-layout: fixed; border-collapse: separate; border-spacing: 0; margin-bottom: 18px; }
.table th { padding: 9px; font-size: 15px; line-height: 23px; font-weight: 700; text-align: left; text-transform: uppercase; background: #f1f1f2; border-bottom: 1px solid #dee2e6; }
.table th:first-child { border-top-left-radius: 5px; }
.table th:last-child { border-top-right-radius: 5px; }
.table td { padding: 9px; background: #f9f9f9; border-bottom: 1px solid #dee2e6; white-space: nowrap; }
.shots .c-type { width: 43%; }
.shots .c-stamp { width: 34%; }
.schedules .c-type { width: 45%; }
.schedules .c-freq { width: 24%; }
.schedules .c-time { width: 14%; }
.status { margin: 0; padding: 0; list-style: none; border: 1px solid #dee2e6; border-radius: 7px; color: #212529; }
.status li { display: flex; align-items: center; justify-content: space-between; height: 46px; padding: 0 18px; border-bottom: 1px solid #dee2e6; }
.status li:last-child { height: 45px; border: 0; }
.badge { padding: 0 8px; border-radius: 12px; background: #2271f3; color: #fff; font-size: 13px; line-height: 23px; font-weight: 700; }
.info { background: #54c7ec; }
.verify {
  position: absolute;
  left: 10px;
  bottom: 8px;
  display: grid;
  place-items: center;
  width: 32px;
  height: 32px;
  border-radius: 50%;
  background: #fff;
  box-shadow: 0 0 4px rgba(0, 0, 0, .35);
}
.scrollbar { width: 21px; display: flex; flex-direction: column; background: #2c2c2c; }
.arrow { width: 21px; height: 27px; }
.track { flex: 1; display: flex; justify-content: center; }
.thumb { width: 13px; height: 95%; border-radius: 7px; background: #9f9f9f; }

/* Taskbar */
.taskbar {
  display: grid;
  grid-template-columns: 1fr auto 1fr;
  align-items: center;
  height: 71px;
  border-top: 2px solid #4a3f63;
  background: linear-gradient(90deg, #1f1c50, #1a165e 15%, #1b175e 33%, #2b1255 44%, #35123f 64%, #38133d 76%, #2c173a 84%, #36153c 90%, #36153c);
  color: #fff;
}
.widget { display: flex; align-items: center; gap: 14px; padding-left: 30px; line-height: 24px; text-align: left; }
.w-title, .w-sub { display: block; }
.w-sub { color: #b9b7d0; }
.apps { display: flex; align-items: center; padding-left: 3px; }
.app { position: relative; display: grid; place-items: center; width: 66px; height: 60px; }
.search {
  display: flex;
  align-items: center;
  width: 328px;
  height: 48px;
  margin: 0 4px 0 5px;
  padding: 0 11px 0 17px;
  border: 1px solid #59527f;
  border-radius: 24px;
  background: #3e3774;
}
.search input { flex: 1; min-width: 0; margin-left: 14px; padding: 0; border: 0; outline: 0; background: none; font: inherit; font-size: 19px; color: #fff; }
.search input::placeholder { color: #cdcade; opacity: 1; }
.castle { width: 62px; height: 38px; }
.count {
  position: absolute;
  top: 4px;
  right: 7px;
  width: 24px;
  height: 24px;
  border-radius: 50%;
  background: #4cc2ff;
  color: #000;
  line-height: 24px;
}
.current::before { content: ""; position: absolute; inset: 0 3px; border: 1px solid #4e2f5c; border-radius: 6px; background: #412554; }
.current svg { position: relative; }
.current .profile { position: absolute; top: 4px; right: 6px; width: 24px; height: 24px; }
.running::after { content: ""; position: absolute; bottom: 1px; left: 29px; width: 9px; height: 5px; border-radius: 3px; background: #a493aa; }
.current::after { left: 21px; width: 24px; background: #4cc2ff; }
.tray { display: flex; align-items: center; justify-content: flex-end; padding-right: 28px; line-height: 24px; }
.tray-btn { display: grid; place-items: center; width: 48px; height: 48px; }
.lang { width: 64px; }
.sys { display: flex; gap: 12px; padding: 0 22px 0 14px; }
.clock { min-width: 94px; text-align: right; }
```
